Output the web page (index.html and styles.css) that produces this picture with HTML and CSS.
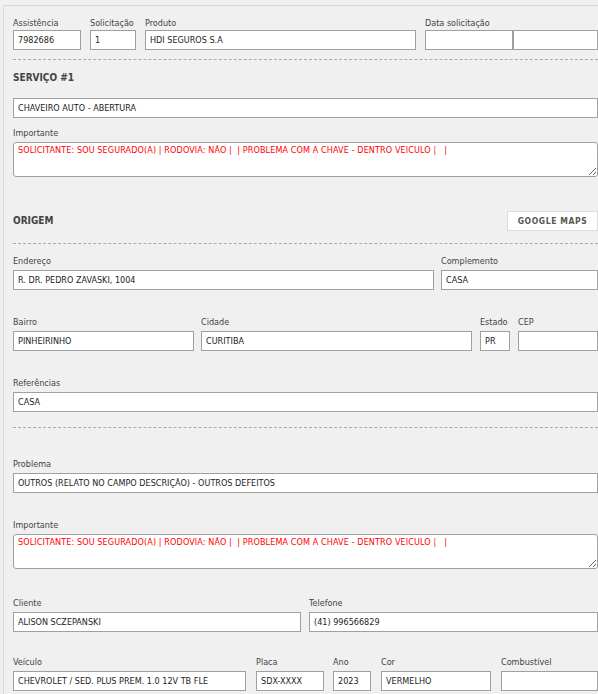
FILE: index.html
```html
<!DOCTYPE html>
<html lang="pt-BR">
<head>
<meta charset="utf-8">
<title>Assistência</title>
<link rel="stylesheet" href="styles.css">
</head>
<body>
<form class="sheet">
  <div class="row row-first">
    <div class="field f-assist"><label>Assistência</label><input type="text" value="7982686"></div>
    <div class="field f-solic"><label>Solicitação</label><input type="text" value="1"></div>
    <div class="field f-produto"><label>Produto</label><input type="text" value="HDI SEGUROS S.A"></div>
    <div class="field grow"><label>Data solicitação</label>
      <div class="pair"><input type="text" class="date-a" value=""><input type="text" class="date-b" value=""></div>
    </div>
  </div>

  <hr class="dash dash-1">

  <div class="head head-servico"><span class="title">SERVIÇO #1</span></div>
  <input type="text" class="full" value="CHAVEIRO AUTO - ABERTURA">

  <div class="field m-imp1"><label>Importante</label>
    <textarea class="note">SOLICITANTE: SOU SEGURADO(A) | RODOVIA: NÃO |  | PROBLEMA COM A CHAVE - DENTRO VEICULO |   |</textarea>
  </div>

  <div class="head head-origem"><span class="title">ORIGEM</span><button type="button" class="maps">GOOGLE MAPS</button></div>

  <hr class="dash dash-2">

  <div class="row m-end">
    <div class="field f-endereco"><label>Endereço</label><input type="text" value="R. DR. PEDRO ZAVASKI, 1004"></div>
    <div class="field grow"><label>Complemento</label><input type="text" value="CASA"></div>
  </div>

  <div class="row row-bairro m-row">
    <div class="field f-bairro"><label>Bairro</label><input type="text" value="PINHEIRINHO"></div>
    <div class="field f-cidade"><label>Cidade</label><input type="text" value="CURITIBA"></div>
    <div class="field f-estado"><label>Estado</label><input type="text" value="PR"></div>
    <div class="field grow"><label>CEP</label><input type="text" value=""></div>
  </div>

  <div class="field m-row"><label>Referências</label><input type="text" value="CASA"></div>

  <hr class="dash dash-3">

  <div class="field m-prob"><label>Problema</label><input type="text" value="OUTROS (RELATO NO CAMPO DESCRIÇÃO) - OUTROS DEFEITOS"></div>

  <div class="field m-imp2"><label>Importante</label>
    <textarea class="note">SOLICITANTE: SOU SEGURADO(A) | RODOVIA: NÃO |  | PROBLEMA COM A CHAVE - DENTRO VEICULO |   |</textarea>
  </div>

  <div class="row row-cliente m-cli">
    <div class="field f-cliente"><label>Cliente</label><input type="text" value="ALISON SCZEPANSKI"></div>
    <div class="field grow"><label>Telefone</label><input type="text" value="(41) 996566829"></div>
  </div>

  <div class="row row-veiculo m-vei">
    <div class="field f-veiculo"><label>Veículo</label><input type="text" value="CHEVROLET / SED. PLUS PREM. 1.0 12V TB FLE"></div>
    <div class="field f-placa"><label>Placa</label><input type="text" value="SDX-XXXX"></div>
    <div class="field f-ano"><label>Ano</label><input type="text" value="2023"></div>
    <div class="field f-cor"><label>Cor</label><input type="text" value="VERMELHO"></div>
    <div class="field grow"><label>Combustível</label><input type="text" value=""></div>
  </div>
</form>
</body>
</html>
```

FILE: styles.css
```css
html, body {
  margin: 0;
  padding: 0;
  overflow: hidden;
  background: #f0f0f0;
}

body {
  font-family: "DejaVu Sans Condensed", "DejaVu Sans", sans-serif;
  font-stretch: semi-condensed;
  font-size: 9px;
  color: #333;
}

.sheet {
  margin: 5px 0 0 3px;
  width: 585px;
  padding: 10px 30px 40px 9px;
  border: 1px solid #d8d8d8;
  background: #f0f0f0;
}

.row {
  display: flex;
  align-items: flex-end;
}

.field {
  display: flex;
  flex-direction: column;
  min-width: 0;
}

.grow { flex: 1; }

label {
  display: block;
  height: 14px;
  line-height: 14px;
  margin-bottom: 2px;
  font-size: 9px;
  color: #444;
  white-space: nowrap;
}

.row-first label { margin-bottom: 0; }

input, textarea {
  font-family: inherit;
  font-stretch: inherit;
  font-size: 9px;
  color: #222;
  background: #fff;
  border: 1px solid #a0a0a0;
  margin: 0;
  outline: none;
  box-sizing: border-box;
}

input {
  display: block;
  height: 20px;
  width: 100%;
  padding: 0 4px;
  border-radius: 0;
}

.full { width: 100%; }

textarea.note {
  display: block;
  width: 100%;
  height: 35px;
  padding: 1px 4px;
  border-radius: 3px;
  color: #ff0000;
  line-height: 12px;
  letter-spacing: 0.1px;
  resize: vertical;
  overflow: hidden;
}

.pair { display: flex; }
.pair .date-a { width: 88px; }
.pair .date-b { flex: 1; }

/* row 1 */
.row-first { gap: 9px; }
.f-assist { width: 68px; }
.f-solic { width: 46px; }
.f-produto { width: 271px; }

.dash {
  border: 0;
  border-top: 1px dashed #aaa;
  height: 0;
  margin: 0;
}
.dash-1 { margin-top: 9px; }
.dash-2 { margin-top: 12px; }
.dash-3 { margin-top: 15px; }

.head {
  display: flex;
  align-items: center;
  justify-content: space-between;
  height: 20px;
}
.head-servico { margin-top: 8px; margin-bottom: 10px; }
.head-origem { margin-top: 34px; }

.title {
  font-weight: bold;
  font-size: 10px;
  color: #444;
  line-height: 20px;
}

.maps {
  width: 91px;
  height: 20px;
  background: #fff;
  border: 1px solid #dcdcdc;
  font-family: inherit;
  font-stretch: inherit;
  font-weight: bold;
  font-size: 8.5px;
  letter-spacing: 0.6px;
  color: #555;
  padding: 0;
  margin: 0;
}

.m-imp1 { margin-top: 8px; }

.m-end { margin-top: 10px; gap: 7px; }
.f-endereco { width: 421px; }

.m-row { margin-top: 25px; }
.row-bairro > .f-bairro { width: 181px; margin-right: 7px; }
.row-bairro > .f-cidade { width: 271px; margin-right: 8px; }
.row-bairro > .f-estado { width: 30px; margin-right: 8px; }

.m-prob { margin-top: 29px; }
.m-imp2 { margin-top: 25px; }

.m-cli { margin-top: 27px; gap: 8px; }
.f-cliente { width: 288px; }

.m-vei { margin-top: 23px; }
.row-veiculo > .f-veiculo { width: 233px; margin-right: 10px; }
.row-veiculo > .f-placa { width: 68px; margin-right: 9px; }
.row-veiculo > .f-ano { width: 38px; margin-right: 10px; }
.row-veiculo > .f-cor { width: 110px; margin-right: 10px; }
```
